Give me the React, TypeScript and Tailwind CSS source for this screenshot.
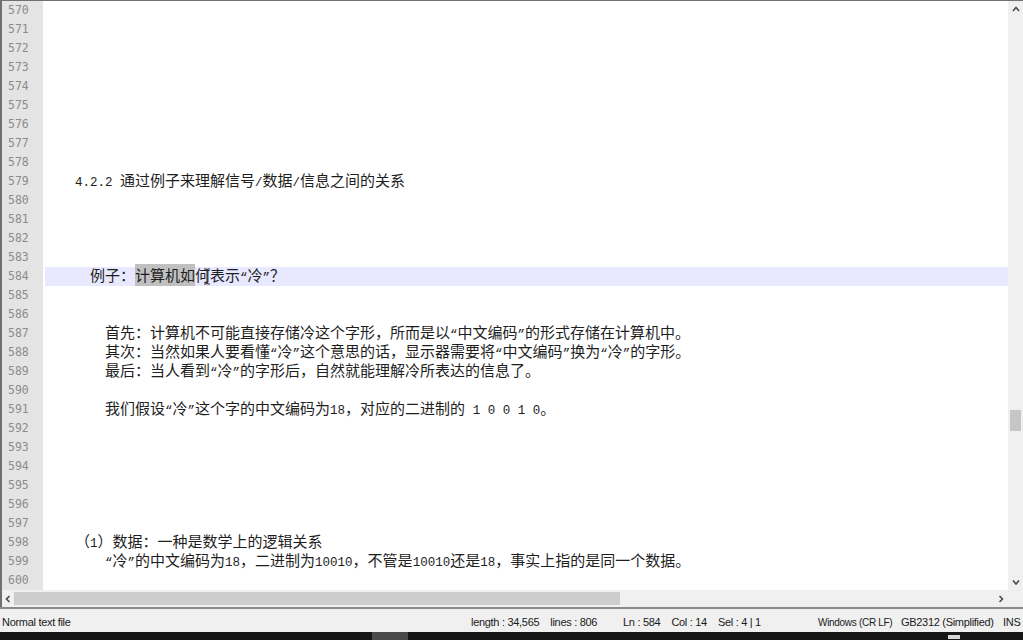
import React from 'react';

type Seg = { text: string; sel?: boolean };

// строки документа, номер -> содержимое
const lines: Record<number, Seg[]> = {
  579: [{ text: '    4.2.2 通过例子来理解信号/数据/信息之间的关系' }],
  584: [
    { text: '      例子：' },
    { text: '计算机如', sel: true },
    { text: '何表示“冷”？' },
  ],
  587: [{ text: '        首先：计算机不可能直接存储冷这个字形，所而是以“中文编码”的形式存储在计算机中。' }],
  588: [{ text: '        其次：当然如果人要看懂“冷”这个意思的话，显示器需要将“中文编码”换为“冷”的字形。' }],
  589: [{ text: '        最后：当人看到“冷”的字形后，自然就能理解冷所表达的信息了。' }],
  591: [{ text: '        我们假设“冷”这个字的中文编码为18，对应的二进制的 1 0 0 1 0。' }],
  598: [{ text: '    （1）数据：一种是数学上的逻辑关系' }],
  599: [{ text: '        “冷”的中文编码为18，二进制为10010，不管是10010还是18，事实上指的是同一个数据。' }],
};

const isNarrow = (ch: string) => ch.charCodeAt(0) < 0x2000 || ch === '“' || ch === '”';

// разбиваем строку на узкие (моно) и широкие (CJK) куски
function splitRuns(text: string) {
  const runs: { narrow: boolean; s: string }[] = [];
  for (const ch of text) {
    const n = isNarrow(ch);
    const last = runs[runs.length - 1];
    if (last && last.narrow === n) last.s += ch;
    else runs.push({ narrow: n, s: ch });
  }
  return runs;
}

function Runs({ text }: { text: string }) {
  return (
    <>
      {splitRuns(text).map((r, i) =>
        r.narrow ? (
          <span key={i} className="font-['Liberation_Mono',monospace] text-[12.5px]">
            {r.s}
          </span>
        ) : (
          <span key={i} className="font-['Noto_Sans_CJK_SC',sans-serif] text-[15px]">
            {r.s}
          </span>
        )
      )}
    </>
  );
}

function Chevron({ dir }: { dir: 'up' | 'down' | 'left' | 'right' }) {
  const d = {
    up: 'M2 7 L5 3.5 L8 7',
    down: 'M2 3.5 L5 7 L8 3.5',
    left: 'M6.5 2 L3.5 5 L6.5 8',
    right: 'M3.5 2 L6.5 5 L3.5 8',
  }[dir];
  return (
    <svg width="10" height="10" viewBox="0 0 10 10">
      <path d={d} fill="none" stroke="#4a4a4a" strokeWidth="1.6" />
    </svg>
  );
}

export default function App() {
  const nums = Array.from({ length: 31 }, (_, i) => 570 + i);

  return (
    <div className="w-[1023px] h-[640px] flex flex-col bg-white overflow-hidden">
      {/* редактор */}
      <div className="flex h-[590px] border-t border-l-2 border-[#707070]">
        {/* номера строк */}
        <div className="w-[41px] shrink-0 bg-[#e4e4e4] flex flex-col">
          {nums.map((n) => (
            <div
              key={n}
              className="h-[19px] leading-[19px] pl-[6px] font-['DejaVu_Sans_Mono',monospace] text-[11.5px] text-[#8c8c8c]"
            >
              {n}
            </div>
          ))}
        </div>

        {/* текст */}
        <div className="flex-1 flex flex-col pl-[2px]">
          {nums.map((n) => (
            <div
              key={n}
              className={
                n === 584
                  ? 'relative h-[19px] leading-[15px] whitespace-pre text-[#1e1e1e] bg-[#e8e8ff]'
                  : 'relative h-[19px] leading-[15px] whitespace-pre text-[#1e1e1e]'
              }
            >
              {(lines[n] || []).map((seg, i) =>
                seg.sel ? (
                  <span key={i} className="bg-[#c0c0c0]">
                    <Runs text={seg.text} />
                  </span>
                ) : (
                  <span key={i}>
                    <Runs text={seg.text} />
                  </span>
                )
              )}
              {n === 584 && (
                <svg className="absolute left-[158px] top-[1px]" width="8" height="17" viewBox="0 0 8 17">
                  <path d="M1 1 H3 Q4 1 4 2 V15 Q4 16 5 16 H7 M7 1 H5 Q4 1 4 2 M4 15 Q4 16 3 16 H1" fill="none" stroke="#222" strokeWidth="1" />
                </svg>
              )}
            </div>
          ))}
        </div>

        {/* вертикальная прокрутка */}
        <div className="w-[15px] shrink-0 bg-[#f0f0f0] flex flex-col items-center">
          <div className="h-[16px] flex items-center justify-center">
            <Chevron dir="up" />
          </div>
          <div className="h-[393px]" />
          <div className="w-[11px] h-[21px] bg-[#c6c6c6]" />
          <div className="flex-1" />
          <div className="h-[16px] flex items-center justify-center">
            <Chevron dir="down" />
          </div>
        </div>
      </div>

      {/* горизонтальная прокрутка */}
      <div className="h-[17px] flex border-l-2 border-[#707070]">
        <div className="flex-1 bg-[#f0f0f0] flex items-center">
          <div className="w-[12px] flex justify-center">
            <Chevron dir="left" />
          </div>
          <div className="w-[606px] h-[13px] bg-[#cdcdcd]" />
          <div className="flex-1" />
          <div className="w-[14px] flex justify-center">
            <Chevron dir="right" />
          </div>
        </div>
        <div className="w-[15px] bg-[#f0f0f0]" />
      </div>

      {/* строка состояния */}
      <div className="h-[25px] pt-[3px] border-t-2 border-[#8a8a8a] bg-[#f0f0f0] flex items-center font-['Liberation_Sans',sans-serif] text-[11px] text-[#1a1a1a] tracking-[-0.3px] whitespace-pre">
        <div className="w-[471px] shrink-0 pl-[2px]">Normal text file</div>
        <div className="w-[150px] shrink-0">length : 34,565{'    '}lines : 806</div>
        <div className="w-[196px] shrink-0 pl-[2px]">Ln : 584{'    '}Col : 14{'    '}Sel : 4 | 1</div>
        <div className="w-[84px] shrink-0 pl-[1px] text-[10px] tracking-[-0.3px]">Windows (CR LF)</div>
        <div className="w-[102px] shrink-0">GB2312 (Simplified)</div>
        <div className="shrink-0">INS</div>
      </div>

      {/* нижняя тёмная полоса */}
      <div className="h-[8px] bg-[#161616] flex">
        <div className="w-[372px]" />
        <div className="w-[36px] bg-[#4a4a4a]" />
        <div className="w-[540px]" />
        <div className="w-[12px] h-[4px] mt-[3px] bg-[#d8d8d8]" />
      </div>
    </div>
  );
}
